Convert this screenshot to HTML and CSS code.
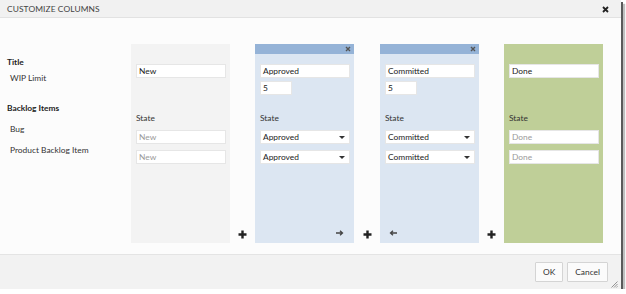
FILE: index.html
```html
<!DOCTYPE html>
<html lang="en">
<head>
    <meta charset="UTF-8">
    <title>Customize Columns</title>
    <link rel="stylesheet" href="styles.css">
</head>
<body>
    <div class="dialog">
        <div class="titlebar">
            <span class="title">CUSTOMIZE COLUMNS</span>
            <svg class="close" width="7" height="7" viewBox="0 0 7 7"><path d="M1 1L6 6M6 1L1 6" stroke="#222" stroke-width="1.8"/></svg>
        </div>

        <div class="content">
            <div class="labels">
                <div class="group">Title</div>
                <div class="item">WIP Limit</div>
                <div class="group backlog">Backlog Items</div>
                <div class="item">Bug</div>
                <div class="item">Product Backlog Item</div>
            </div>

            <div class="columns">
                <div class="col col-proposed">
                    <div class="col-head"></div>
                    <div class="field title-field">New</div>
                    <div class="wip-spacer"></div>
                    <div class="state-label">State</div>
                    <div class="field muted">New</div>
                    <div class="field muted">New</div>
                </div>
                <div class="add"><svg width="9" height="9" viewBox="0 0 9 9"><path d="M4.5 0.5V8.5M0.5 4.5H8.5" stroke="#222" stroke-width="2.4"/></svg></div>

                <div class="col col-progress">
                    <div class="col-head"><svg width="6" height="6" viewBox="0 0 6 6"><path d="M1 1L5 5M5 1L1 5" stroke="#555" stroke-width="1.4"/></svg></div>
                    <div class="field title-field">Approved</div>
                    <div class="field wip">5</div>
                    <div class="state-label">State</div>
                    <div class="field select">Approved<span class="caret"></span></div>
                    <div class="field select">Approved<span class="caret"></span></div>
                    <div class="col-foot right">
                        <svg width="8" height="6" viewBox="0 0 8 6"><path d="M0 3H6M4 0.8L6.5 3L4 5.2" stroke="#444" stroke-width="1.3" fill="none"/></svg>
                    </div>
                </div>
                <div class="add add-wide"><svg width="9" height="9" viewBox="0 0 9 9"><path d="M4.5 0.5V8.5M0.5 4.5H8.5" stroke="#222" stroke-width="2.4"/></svg></div>

                <div class="col col-progress">
                    <div class="col-head"><svg width="6" height="6" viewBox="0 0 6 6"><path d="M1 1L5 5M5 1L1 5" stroke="#555" stroke-width="1.4"/></svg></div>
                    <div class="field title-field">Committed</div>
                    <div class="field wip">5</div>
                    <div class="state-label">State</div>
                    <div class="field select">Committed<span class="caret"></span></div>
                    <div class="field select">Committed<span class="caret"></span></div>
                    <div class="col-foot">
                        <svg width="8" height="6" viewBox="0 0 8 6"><path d="M8 3H2M4 0.8L1.5 3L4 5.2" stroke="#444" stroke-width="1.3" fill="none"/></svg>
                    </div>
                </div>
                <div class="add"><svg width="9" height="9" viewBox="0 0 9 9"><path d="M4.5 0.5V8.5M0.5 4.5H8.5" stroke="#222" stroke-width="2.4"/></svg></div>

                <div class="col col-done">
                    <div class="col-head"></div>
                    <div class="field title-field">Done</div>
                    <div class="wip-spacer"></div>
                    <div class="state-label">State</div>
                    <div class="field muted">Done</div>
                    <div class="field muted">Done</div>
                </div>
            </div>
        </div>

        <div class="footer">
            <button class="btn btn-ok">OK</button>
            <button class="btn">Cancel</button>
            <svg class="grip" width="7" height="7" viewBox="0 0 7 7"><path d="M6.5 0.5L0.5 6.5M6.5 3L3 6.5M6.5 5.3L5.3 6.5" stroke="#888" stroke-width="0.9"/></svg>
        </div>
    </div>
</body>
</html>
```

FILE: styles.css
```css
body {
    margin: 0;
    background: #ffffff;
    font-family: Lato, 'Open Sans', sans-serif;
    font-size: 8.4px;
    color: #333;
}

.dialog {
    width: 621px;
    height: 289px;
    display: flex;
    flex-direction: column;
    background: #fcfcfc;
    box-shadow: 2px 2px 0 #5a5a5a, 4px 4px 1px rgba(0, 0, 0, 0.25);
}

.titlebar {
    height: 17px;
    display: flex;
    align-items: center;
    justify-content: space-between;
    padding: 0 12px 0 7px;
    background: #f1f1f1;
    border-bottom: 1px solid #e2e2e2;
}

.title {
    font-size: 8.4px;
    letter-spacing: 0.1px;
    color: #444;
}

.close {
    margin-top: 1px;
}

.content {
    flex: 1;
    display: flex;
    padding-top: 26px;
}

.labels {
    width: 124px;
    padding-left: 7px;
    padding-top: 12px;
}

.group {
    font-weight: 700;
    color: #222;
    height: 12px;
    line-height: 12px;
}

.item {
    padding-left: 3px;
    height: 12px;
    line-height: 12px;
    margin-top: 4px;
}

.backlog {
    margin-top: 18px;
}

.labels .backlog + .item {
    margin-top: 9px;
}

.labels .item + .item {
    margin-top: 9px;
}

.columns {
    display: flex;
    height: 199px;
}

.col {
    width: 99px;
    display: flex;
    flex-direction: column;
}

.col-proposed {
    background: #f3f3f3;
}

.col-progress {
    background: #dce6f2;
}

.col-done {
    background: #bfcf98;
}

.col-head {
    height: 10px;
    display: flex;
    justify-content: flex-end;
    align-items: center;
    padding-right: 3px;
}

.col-progress .col-head {
    background: #95b3d7;
}

.field {
    height: 14px;
    line-height: 13px;
    box-sizing: border-box;
    margin: 0 4px 0 5px;
    padding-left: 2px;
    background: #fff;
    border: 1px solid #e6e6e6;
    color: #222;
    position: relative;
}

.title-field {
    margin-top: 10px;
}

.wip {
    width: 32px;
    margin-top: 3px;
}

.wip-spacer {
    height: 17px;
}

.state-label {
    margin: 17px 0 0 5px;
    height: 12px;
    line-height: 12px;
    margin-bottom: 6px;
}

.field + .field.select,
.field.muted + .field.muted {
    margin-top: 6px;
}

.muted {
    color: #9a9a9a;
}

.caret {
    position: absolute;
    right: 4px;
    top: 5px;
    border-left: 3px solid transparent;
    border-right: 3px solid transparent;
    border-top: 3px solid #333;
}

.col-foot {
    margin-top: auto;
    height: 14px;
    display: flex;
    align-items: center;
    padding: 0 10px 3px 9px;
}

.col-foot.right {
    justify-content: flex-end;
}

.add {
    width: 25px;
    display: flex;
    justify-content: center;
    align-items: flex-end;
    padding-bottom: 4px;
    box-sizing: border-box;
}

.add-wide {
    width: 26px;
}

.footer {
    height: 35px;
    box-sizing: border-box;
    background: #f2f2f2;
    border-top: 1px solid #e4e4e4;
    display: flex;
    justify-content: flex-end;
    align-items: flex-start;
    gap: 4px;
    padding: 7px 13px 0 0;
    position: relative;
}

.btn {
    height: 20px;
    padding: 0 7px;
    font-family: Lato, 'Open Sans', sans-serif;
    font-size: 8.4px;
    color: #333;
    background: #fbfbfb;
    border: 1px solid #d4d4d4;
    border-radius: 1px;
}

.btn-ok {
    width: 28px;
    padding: 0;
}

.grip {
    position: absolute;
    right: 3px;
    bottom: 1px;
}
```
